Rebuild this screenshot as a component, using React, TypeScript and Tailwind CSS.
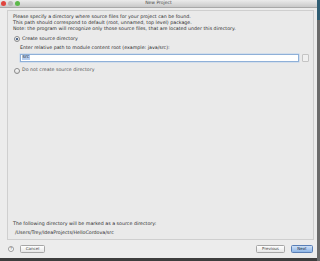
import React from 'react';

function Radio({ checked }: { checked?: boolean }) {
  return (
    <span className="flex h-[6px] w-[6px] items-center justify-center rounded-full border-[0.5px] border-[#8a8a8a] bg-gradient-to-b from-white to-[#dcdcdc]">
      {checked && <span className="h-[2.5px] w-[2.5px] rounded-full bg-[#1d3f6e]" />}
    </span>
  );
}

function Btn({ label, primary, w }: { label: string; primary?: boolean; w: string }) {
  return (
    <button
      className={
        'flex h-[8px] items-center justify-center rounded-[1.5px] border-[0.5px] text-[4px] leading-none ' +
        w +
        (primary
          ? ' border-[#5a7fb6] bg-gradient-to-b from-[#cfe1f7] to-[#8db5e6] text-[#1a2a40]'
          : ' border-[#a6a6a6] bg-gradient-to-b from-white to-[#e6e6e6] text-[#444]')
      }
    >
      {label}
    </button>
  );
}

export default function App() {
  return (
    <div
      className="flex h-[261px] w-[320px] bg-[#3d3d3d] text-[#2a2a2a]"
      style={{ fontFamily: '"DejaVu Sans", Verdana, sans-serif' }}
    >
      <div className="flex h-[258px] w-[317px] flex-col bg-[#ececec]">
        {/* title bar */}
        <div className="relative flex h-[8px] items-center justify-center border-b-[0.5px] border-[#a8a8a8] bg-gradient-to-b from-[#ebebeb] to-[#c9c9c9]">
          <div className="absolute left-[1px] top-[1px] flex gap-[2px]">
            <span className="h-[5px] w-[5px] rounded-full bg-[#e0443e]" />
            <span className="h-[5px] w-[5px] rounded-full bg-[#b8b8b8]" />
            <span className="h-[5px] w-[5px] rounded-full bg-[#5cb84a]" />
          </div>
          <span className="text-[4.5px] leading-none text-[#4a4a4a]">New Project</span>
        </div>

        {/* content panel */}
        <div className="ml-[7px] mr-[3px] mt-[2px] flex h-[230px] flex-col border-[0.5px] border-[#cfcfcf] bg-[#eaeaea] pl-[5px] pr-[4px] pt-[3px]">
          <div className="text-[4.75px] leading-[6px]">
            <p>Please specify a directory where source files for your project can be found.</p>
            <p>This path should correspond to default (root, unnamed, top level) package.</p>
            <p>Note: the program will recognize only those source files, that are located under this directory.</p>
          </div>
          <div className="mt-[4px] flex items-center gap-[2px] pl-[1px]">
            <Radio checked />
            <span className="text-[4.75px] leading-none">Create source directory</span>
          </div>
          <p className="mt-[4px] pl-[7px] text-[4.75px] leading-none">
            Enter relative path to module content root (example: java/src):
          </p>
          <div className="mt-[3px] flex items-center gap-[3px] pl-[7px]">
            <div className="flex h-[8px] flex-1 items-center border-[1px] border-[#8fb0d8] bg-white pl-[1px] shadow-[0_0_0_0.5px_#bcd1ec]">
              <span className="bg-[#b4cdef] px-[0.5px] text-[4.75px] leading-none">src</span>
            </div>
            <div className="h-[8px] w-[7px] rounded-[1px] border-[0.5px] border-[#c4c4c4] bg-[#f0f0f0]" />
          </div>
          <div className="mt-[6px] flex items-center gap-[2px] pl-[1px]">
            <Radio />
            <span className="text-[4.75px] leading-none text-[#555]">Do not create source directory</span>
          </div>

          <div className="mt-auto pb-[3px] text-[4.75px] leading-none">
            <p>The following directory will be marked as a source directory:</p>
            <p className="mt-[5px] pl-[2px]">/Users/Trey/IdeaProjects/HelloCordova/src</p>
          </div>
        </div>

        {/* footer */}
        <div className="flex flex-1 items-center pl-[8px] pr-[4px]">
          <span className="flex h-[6px] w-[6px] items-center justify-center rounded-full border-[0.5px] border-[#9a9a9a] bg-white text-[4px] leading-none text-[#555]">
            ?
          </span>
          <div className="ml-[6px]">
            <Btn label="Cancel" w="w-[25px]" />
          </div>
          <div className="ml-auto flex gap-[6px]">
            <Btn label="Previous" w="w-[29px]" />
            <Btn label="Next" primary w="w-[22px]" />
          </div>
        </div>
      </div>
      <div className="flex h-[261px] flex-1 flex-col">
        <div className="h-[20px] bg-[#2f5d73]" />
        <div className="flex-1 bg-[#6b6b6b]" />
      </div>
    </div>
  );
}
